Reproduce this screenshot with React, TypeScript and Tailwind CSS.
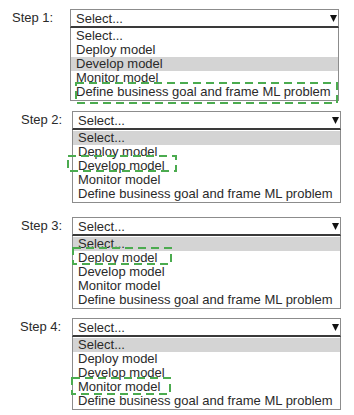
const OPTIONS = [
    'Select...',
    'Deploy model',
    'Develop model',
    'Monitor model',
    'Define business goal and frame ML problem',
];

type Mark = { x: number; y: number; w: number; h: number };

type StepProps = {
    label: string;
    highlighted: number;
    mark: Mark;
    labelClass: string;
    wrapClass: string;
};

function DashedMark({ mark }: { mark: Mark }) {
    return (
        <svg
            className="pointer-events-none absolute"
            style={{ left: mark.x - 2, top: mark.y - 2 }}
            width={mark.w + 4}
            height={mark.h + 4}
        >
            <rect
                x={2}
                y={2}
                width={mark.w}
                height={mark.h}
                fill="none"
                stroke="#4bab4f"
                strokeWidth={2}
                strokeDasharray="8 5"
            />
        </svg>
    );
}

function Step({ label, highlighted, mark, labelClass, wrapClass }: StepProps) {
    return (
        <div className={`relative flex ${wrapClass}`}>
            <div className={`flex-none pt-[1px] text-[13px] leading-[16px] text-[#2a2a2a] ${labelClass}`}>{label}</div>
            <div className="w-[269px] flex-none">
                <div className="flex h-[19px] items-center justify-between border border-b-2 border-[#8c8c8c] border-b-[#3a3a3a] pl-[5px] pr-[1px] text-[13px] text-[#2a2a2a]">
                    <span className="pt-[1px]">Select...</span>
                    <svg width="7" height="7" viewBox="0 0 7 7" className="mt-[1px]">
                        <path d="M0 0 L7 0 L3.5 7 Z" fill="#111" />
                    </svg>
                </div>
                <div className="border border-t-0 border-[#8c8c8c] py-[1px]">
                    {OPTIONS.map((o, i) => (
                        <div
                            key={o}
                            className={`h-[14px] pl-[5px] text-[13px] leading-[14px] text-[#2a2a2a] ${
                                i === highlighted ? 'bg-[#d4d4d4]' : ''
                            }`}
                        >
                            {o}
                        </div>
                    ))}
                </div>
            </div>
            <DashedMark mark={mark} />
        </div>
    );
}

export default function App() {
    return (
        <div
            className="h-[415px] w-[354px] overflow-hidden bg-white"
            style={{ fontFamily: '"Liberation Sans", Arial, sans-serif' }}
        >
            <Step
                label="Step 1:"
                highlighted={2}
                labelClass="w-[70px] pl-[12px]"
                wrapClass="pt-[9px]"
                mark={{ x: 76, y: 83, w: 261, h: 20 }}
            />
            <Step
                label="Step 2:"
                highlighted={0}
                labelClass="w-[72px] pl-[21px]"
                wrapClass="mt-[10px]"
                mark={{ x: 68, y: 45, w: 108, h: 15 }}
            />
            <Step
                label="Step 3:"
                highlighted={0}
                labelClass="w-[72px] pl-[21px]"
                wrapClass="mt-[14px]"
                mark={{ x: 73, y: 31, w: 98, h: 16 }}
            />
            <Step
                label="Step 4:"
                highlighted={0}
                labelClass="w-[72px] pl-[20px]"
                wrapClass="mt-[9px]"
                mark={{ x: 72, y: 60, w: 98, h: 16 }}
            />
        </div>
    );
}
